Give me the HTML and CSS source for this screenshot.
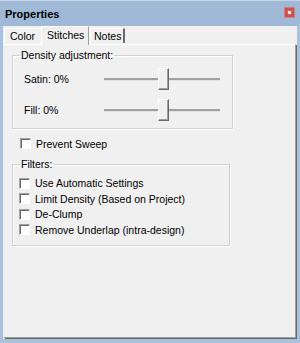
FILE: index.html
```html
<!DOCTYPE html>
<html lang="en">
<head>
    <meta charset="UTF-8">
    <title>Properties</title>
    <link rel="stylesheet" href="styles.css">
</head>
<body>
    <div class="window">
        <div class="titlebar">
            <span class="title">Properties</span>
            <span class="close">
                <svg width="11" height="11" viewBox="0 0 11 11">
                    <rect x="0.5" y="0.5" width="10" height="10" fill="#c9514f" stroke="#d77a78"/>
                    <path d="M4 4 L7 7 M7 4 L4 7" stroke="#fff" stroke-width="1.2"/>
                </svg>
            </span>
        </div>
        <div class="client">
            <div class="tabs">
                <div class="tab first">Color</div>
                <div class="tab selected">Stitches</div>
                <div class="tab last">Notes</div>
            </div>
            <div class="panel">
                <fieldset class="group density">
                    <legend>Density adjustment:</legend>
                    <div class="slider-row">
                        <span class="label">Satin: 0%</span>
                        <div class="slider">
                            <div class="track"></div>
                            <div class="thumb" style="left: 54px"></div>
                        </div>
                    </div>
                    <div class="slider-row">
                        <span class="label">Fill: 0%</span>
                        <div class="slider">
                            <div class="track"></div>
                            <div class="thumb" style="left: 54px"></div>
                        </div>
                    </div>
                </fieldset>

                <label class="check sweep"><span class="box"></span>Prevent Sweep</label>

                <fieldset class="group filters">
                    <legend>Filters:</legend>
                    <label class="check"><span class="box"></span>Use Automatic Settings</label>
                    <label class="check"><span class="box"></span>Limit Density (Based on Project)</label>
                    <label class="check"><span class="box"></span>De-Clump</label>
                    <label class="check"><span class="box"></span>Remove Underlap (intra-design)</label>
                </fieldset>
            </div>
        </div>
    </div>
</body>
</html>
```

FILE: styles.css
```css
body {
    margin: 0;
    font-family: "Liberation Sans", Arial, sans-serif;
    font-size: 10.5px;
    color: #000;
}
.window {
    width: 300px;
    height: 343px;
    box-sizing: border-box;
    background-color: #a9c1dc;
    border-top: 1px solid #c4d5e8;
    display: flex;
    flex-direction: column;
}
.titlebar {
    height: 25px;
    display: flex;
    align-items: center;
    justify-content: space-between;
    padding: 0 5px 0 5px;
    background-color: #9fb9d6;
}
.title {
    font-weight: bold;
    font-size: 11px;
}
.close {
    display: flex;
    margin-top: -2px;
}
.client {
    flex: 1;
    margin: 0 3px 4px 3px;
    background-color: #f0f0f0;
    display: flex;
    flex-direction: column;
    border-left: 1px solid #e8eef5;
}
.tabs {
    height: 18px;
    display: flex;
    align-items: flex-end;
    position: relative;
    z-index: 1;
}
.tab {
    height: 15px;
    line-height: 15px;
    border-top: 1px solid #fff;
    border-left: 1px solid #fff;
    box-sizing: border-box;
    margin-bottom: 1px;
}
.tab.first {
    width: 37px;
    padding-left: 5px;
}
.tab.selected {
    width: 48px;
    height: 19px;
    line-height: 16px;
    padding-left: 5px;
    margin-bottom: -1px;
    border-right: 1px solid #a0a0a0;
    background-color: #f0f0f0;
}
.tab.last {
    width: 35px;
    margin-left: 1px;
    padding-left: 3px;
    border-right: 2px solid #696969;
}
.panel {
    flex: 1;
    border-top: 1px solid #fff;
    border-right: 1px solid #a0a0a0;
    border-bottom: 1px solid #a0a0a0;
    box-shadow: 1px 1px 0 #696969;
    margin-right: 1px;
    margin-bottom: 1px;
    padding: 4px 8px 0 8px;
}
.group {
    margin: 0;
    border: 1px solid #d0d0d0;
    border-radius: 0;
    box-shadow: inset 1px 1px 0 #fff, 1px 1px 0 #fff;
}
.group legend {
    padding: 0 1px;
    line-height: 13px;
}
.density {
    width: 221px;
    box-sizing: border-box;
    padding: 6px 11px 7px 11px;
    display: flex;
    flex-direction: column;
    gap: 9px;
}
.density legend {
    margin-left: -4px;
}
.slider-row {
    display: flex;
    align-items: center;
    height: 22px;
}
.label {
    width: 80px;
}
.slider {
    position: relative;
    width: 116px;
    height: 22px;
    display: flex;
    align-items: center;
}
.track {
    width: 100%;
    height: 1px;
    border-top: 1px solid #a0a0a0;
    border-bottom: 1px solid #e3e3e3;
    background-color: #a0a0a0;
}
.thumb {
    position: absolute;
    top: 0;
    width: 11px;
    height: 22px;
    box-sizing: border-box;
    background-color: #f0f0f0;
    border-top: 1px solid #fff;
    border-left: 1px solid #fff;
    border-right: 1px solid #696969;
    border-bottom: 1px solid #696969;
    box-shadow: inset -1px -1px 0 #a0a0a0;
}
.check {
    display: flex;
    align-items: center;
    height: 15.5px;
    white-space: nowrap;
}
.box {
    width: 11px;
    height: 11px;
    box-sizing: border-box;
    margin-right: 5px;
    background-color: #fff;
    border-top: 1px solid #a0a0a0;
    border-left: 1px solid #a0a0a0;
    border-right: 1px solid #fff;
    border-bottom: 1px solid #fff;
    box-shadow: inset 1px 1px 0 #696969;
}
.sweep {
    margin: 7px 0 6px 8px;
}
.filters {
    width: 218px;
    box-sizing: border-box;
    padding: 5px 6px 7px 6px;
}
.filters legend {
    margin-left: 1px;
}
```
